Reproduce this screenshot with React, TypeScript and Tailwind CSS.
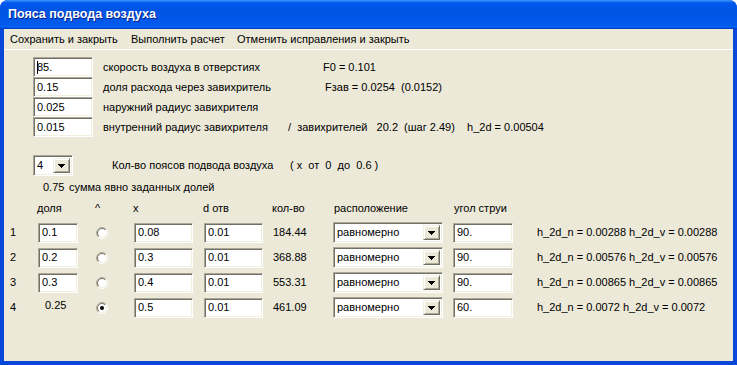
const inset =
  "bg-white border border-t-[#aca899] border-l-[#aca899] border-b-white border-r-white shadow-[inset_1px_1px_0_#716f64,inset_-1px_-1px_0_#f1efe2]";

function Field({ value, w, caret }: { value: string; w: string; caret?: boolean }) {
  return (
    <div className={`${w} h-[20px] flex items-center pl-[3px] text-[11px] text-black ${inset}`}>
      {caret && <span className="w-px h-[13px] bg-black -mr-px" />}
      {value}
    </div>
  );
}

function DropBtn() {
  return (
    <div className="w-[17px] h-full flex items-center justify-center bg-[#ece9d8] border border-t-[#f1efe2] border-l-[#f1efe2] border-b-[#716f64] border-r-[#716f64] shadow-[inset_1px_1px_0_#fff,inset_-1px_-1px_0_#aca899]">
      <svg width="7" height="4" viewBox="0 0 7 4" shapeRendering="crispEdges">
        <path d="M0 0h7v1h-1v1h-1v1h-1v1h-1v-1h-1v-1h-1v-1h-1z" fill="#000" />
      </svg>
    </div>
  );
}

function Combo({ value, w }: { value: string; w: string }) {
  return (
    <div className={`${w} h-[21px] flex items-center p-[2px] text-[11px] text-black ${inset}`}>
      <span className="flex-1 pl-[1px]">{value}</span>
      <DropBtn />
    </div>
  );
}

function Radio({ checked }: { checked?: boolean }) {
  return (
    <svg width="12" height="12" viewBox="0 0 12 12">
      <defs>
        <linearGradient id="ro" x1="0" y1="0" x2="1" y2="1">
          <stop offset="0.5" stopColor="#aca899" />
          <stop offset="0.5" stopColor="#ffffff" />
        </linearGradient>
        <linearGradient id="ri" x1="0" y1="0" x2="1" y2="1">
          <stop offset="0.5" stopColor="#716f64" />
          <stop offset="0.5" stopColor="#f1efe2" />
        </linearGradient>
      </defs>
      <circle cx="6" cy="6" r="5.5" fill="none" stroke="url(#ro)" />
      <circle cx="6" cy="6" r="4.5" fill="#fff" stroke="url(#ri)" />
      {checked && <circle cx="6" cy="6" r="2" fill="#000" />}
    </svg>
  );
}

const rows = [
  { n: "1", dolya: "0.1", x: "0.08", d: "0.01", cnt: "184.44", ang: "90.", h: "h_2d_n = 0.00288 h_2d_v = 0.00288" },
  { n: "2", dolya: "0.2", x: "0.3", d: "0.01", cnt: "368.88", ang: "90.", h: "h_2d_n = 0.00576 h_2d_v = 0.00576" },
  { n: "3", dolya: "0.3", x: "0.4", d: "0.01", cnt: "553.31", ang: "90.", h: "h_2d_n = 0.00865 h_2d_v = 0.00865" },
  { n: "4", dolya: "", x: "0.5", d: "0.01", cnt: "461.09", ang: "60.", h: "h_2d_n = 0.0072 h_2d_v = 0.0072" },
];

export default function App() {
  return (
    <div className="w-[737px] h-[365px] flex flex-col rounded-t-[8px] overflow-hidden bg-[#0847d8] font-['Liberation_Sans',Arial,sans-serif] text-black">
      {/* title bar */}
      <div className="h-[29px] shrink-0 flex items-center pl-[8px] bg-[linear-gradient(180deg,#3d95ff,#0058ee_10%,#0054e3_40%,#005aec_85%,#0062f6_92%,#0055e5_95%,#0042cc_97%,#0042cc)]">
        <span className="text-white font-bold text-[12.5px] [text-shadow:1px_1px_0_#0a1e8a]">Пояса подвода воздуха</span>
      </div>

      <div className="flex-1 flex flex-col mx-[4px] mb-[4px] bg-[#ece9d8]">
        {/* menu */}
        <div className="h-[21px] shrink-0 flex items-center text-[11px] border-b border-white">
          <span className="w-[127px] pl-[6px]">Сохранить и закрыть</span>
          <span className="w-[106px]">Выполнить расчет</span>
          <span>Отменить исправления и закрыть</span>
        </div>

        {/* parameters */}
        <div className="pt-[7px] text-[11px]">
          <div className="h-[20px] flex items-center pl-[29px]">
            <Field value="85." w="w-[60px]" caret />
            <span className="ml-[10px] w-[220px]">скорость воздуха в отверстиях</span>
            <span>F0 = 0.101</span>
          </div>
          <div className="h-[20px] flex items-center pl-[29px]">
            <Field value="0.15" w="w-[60px]" />
            <span className="ml-[10px] w-[222px]">доля расхода через завихритель</span>
            <span className="whitespace-pre">Fзав = 0.0254  (0.0152)</span>
          </div>
          <div className="h-[20px] flex items-center pl-[29px]">
            <Field value="0.025" w="w-[60px]" />
            <span className="ml-[10px]">наружний радиус завихрителя</span>
          </div>
          <div className="h-[20px] flex items-center pl-[29px]">
            <Field value="0.015" w="w-[60px]" />
            <span className="ml-[10px] w-[185px]">внутренний радиус завихрителя</span>
            <span className="whitespace-pre">/  завихрителей   20.2  (шаг 2.49)    h_2d = 0.00504</span>
          </div>
        </div>

        {/* belts count */}
        <div className="mt-[18px] h-[21px] flex items-center pl-[29px] text-[11px]">
          <Combo value="4" w="w-[40px]" />
          <span className="ml-[39px] w-[178px]">Кол-во поясов подвода воздуха</span>
          <span className="whitespace-pre">( x  от  0  до  0.6 )</span>
        </div>
        <div className="mt-[3px] h-[16px] flex items-center pl-[39px] text-[11px]">
          <span className="w-[26px]">0.75</span>
          <span>сумма явно заданных долей</span>
        </div>

        {/* table header */}
        <div className="mt-[5px] h-[16px] flex items-center pl-[6px] text-[11px]">
          <span className="w-[28px]" />
          <span className="w-[54px] -ml-px">доля</span>
          <span className="w-[42px] pl-[4px]">^</span>
          <span className="w-[70px]">x</span>
          <span className="w-[69px]">d отв</span>
          <span className="w-[60px]">кол-во</span>
          <span className="w-[120px] pl-[2px]">расположение</span>
          <span className="w-[84px] pl-[2px]">угол струи</span>
        </div>

        {/* table rows */}
        <div className="mt-[4px] text-[11px]">
          {rows.map((r) => (
            <div key={r.n} className="h-[25px] flex items-center pl-[6px]">
              <span className="w-[28px]">{r.n}</span>
              <div className="w-[54px]">
                {r.dolya ? <Field value={r.dolya} w="w-[40px]" /> : <span className="pl-[7px] relative -top-[2px]">0.25</span>}
              </div>
              <div className="w-[42px] pl-[4px] flex">
                <Radio checked={r.n === "4"} />
              </div>
              <div className="w-[70px]">
                <Field value={r.x} w="w-[59px]" />
              </div>
              <div className="w-[69px]">
                <Field value={r.d} w="w-[59px]" />
              </div>
              <span className="w-[60px]">{r.cnt}</span>
              <div className="w-[120px]">
                <Combo value="равномерно" w="w-[110px]" />
              </div>
              <div className="w-[84px]">
                <Field value={r.ang} w="w-[60px]" />
              </div>
              <span>{r.h}</span>
            </div>
          ))}
        </div>
      </div>
    </div>
  );
}
